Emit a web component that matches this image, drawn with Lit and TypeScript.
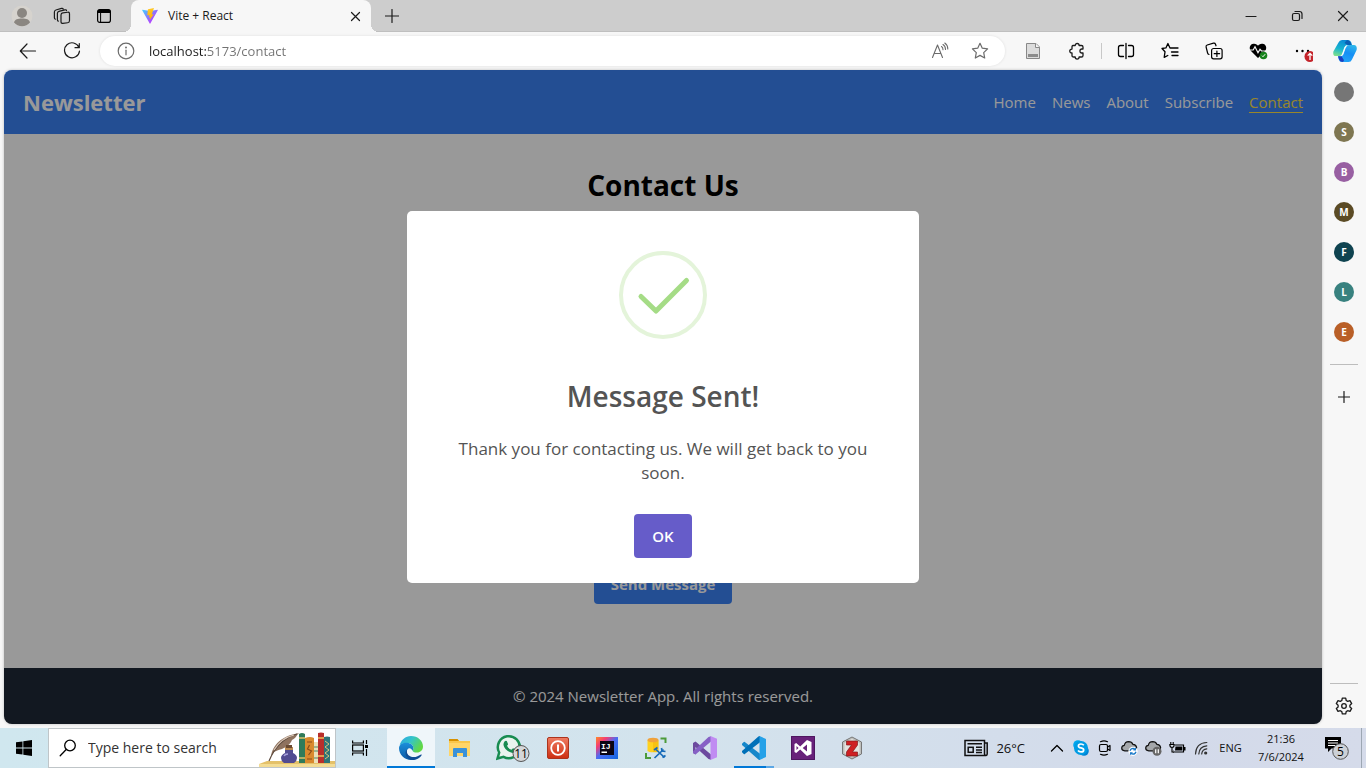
import { LitElement, html, css, svg } from "lit";
import { customElement, state } from "lit/decorators.js";

const avatar = html`<svg width="22" height="22" viewBox="0 0 22 22"><circle cx="11" cy="11" r="10.5" fill="#d6d3ce"/><circle cx="11" cy="8" r="5" fill="#8a8681"/><path d="M3 17.4c1-3 3.5-3.9 8-3.9s7 .9 8 3.9a10.300 10.300 0 0 1-16 0z" fill="#8a8681"/></svg>`;

const line = (size: number, body: unknown, color = "#1b1b1b", width = 1.2) => html`<svg
  width=${size} height=${size} viewBox="0 0 ${size} ${size}" fill="none" stroke=${color}
  stroke-width=${width} stroke-linecap="round" stroke-linejoin="round">${body}</svg>`;

const workspaces = line(18, svg`<rect x="8" y="5.500" width="8.500" height="10.500" rx="1.800" transform="skewY(-8) translate(0 1.800)"/><path d="M5.400 14.200q-1-.2-1-1.500V6.200q0-1.500 1.500-1.900l5.900-1.500q1.500-.3 1.700.8M2.400 12.200q-1-.3-1-1.500V5q0-1.600 1.500-2L8.500 1.400q1.400-.3 1.700.6"/>`);
const tabActions = html`<svg width="16" height="16" viewBox="0 0 16 16"><rect x="1.600" y="1.600" width="12.800" height="12.800" rx="2.200" fill="none" stroke="#000" stroke-width="1.200"/><path d="M1.500 5V3.500a2 2 0 0 1 2-2h9a2 2 0 0 1 2 2V5z" fill="#000"/><path d="M4.600 5v9.500" stroke="#000"/></svg>`;
const vite = html`<svg width="16" height="16" viewBox="0 0 16 16"><defs><linearGradient id="v1" x1="0" y1="0" x2="1" y2="1"><stop offset="0" stop-color="#41d1ff"/><stop offset=".8" stop-color="#bd34fe"/></linearGradient><linearGradient id="v2" x1="0" y1="0" x2="0" y2="1"><stop offset="0" stop-color="#ffc928"/><stop offset="1" stop-color="#ffb000"/></linearGradient></defs><path d="M15.800 2.300 8.300 15.600q-.3.400-.6 0L.2 2.300q-.2-.5.3-.5L8 3.100l7.500-1.300q.5 0 .3.500z" fill="url(#v1)"/><path d="M12 .1 6.100 1.200q-.2 0-.2.200L5.300 7.300l2.200.0-.5 2.200 1.200-.3-.5 2.800 4-5.700-2 .2z" fill="url(#v2)"/></svg>`;
const cross = (n: number) => line(n, svg`<path d="M1.500 1.500 ${n - 1.5} ${n - 1.5}M${n - 1.5} 1.500 1.500 ${n - 1.5}"/>`);
const plus = line(14, svg`<path d="M7 .5v13M.5 7h13"/>`);
const minimize = line(12, svg`<path d="M1 6.500h10"/>`);
const restore = line(12, svg`<rect x="1.500" y="3.500" width="7" height="7" rx="1.500"/><path d="M4 1.500h4.500a2.500 2.500 0 0 1 2.500 2.500v4.500"/>`);
const back = line(18, svg`<path d="M16.500 9H1.500M8 2 1.300 9 8 16"/>`);
const refresh = line(18, svg`<path d="M16 5.500A7.500 7.500 0 1 0 16.500 9M16.300 1.500v4.200H12"/>`);
const info = line(18, svg`<circle cx="9" cy="9" r="7.800"/><path d="M9 8.200v4.600"/><circle cx="9" cy="5.600" r=".4"/>`, "#6b6b6b");
const readAloud = line(18, svg`<path d="M1.500 15.500 6.500 3l5 12.500M3.300 11.500h6.500M10.500 4.500q1.500 1 1.500 3.200M12 2.500q2.500 1.500 2.500 5M13.800 1q3 2 3 6"/>`, "#6b6b6b", 1.1);
const star = line(18, svg`<path d="M9 1.300l2.300 4.900 5.300.7-3.900 3.700 1 5.400L9 13.400 4.300 16l1-5.400L1.400 6.900l5.300-.7z"/>`, "#6b6b6b");
const savedPage = html`<svg width="16" height="18" viewBox="0 0 16 18"><path d="M1.500 1.500h9.500l3.500 3.500v11.500h-13z" fill="#dcdcdc" stroke="#888"/><path d="M10.500 1.500V5.500h4" fill="#f5f5f5" stroke="#888"/><path d="M3 12h10v3H3z" fill="#8c8c8c"/></svg>`;
const puzzle = line(18, svg`<path d="M5 3.500h2.200c0-2.700 3.900-2.700 3.900 0h2.300q1.600 0 1.600 1.600V7h-1.400c-2.300.2-2.300 3.800 0 4H15v2.400q0 1.600-1.600 1.600h-2.300c0 2.700-3.900 2.700-3.900 0H5.600Q4 15 4 13.400V11C1 11.100 1 7 4 7.100V5.100Q4 3.500 5 3.500z"/>`, "#1b1b1b", 1.3);
const split = line(18, svg`<path d="M6.500 3.500h-3q-2 0-2 2v7q0 2 2 2h3M11.500 3.500h3q2 0 2 2v7q0 2-2 2h-3M9 1.500v15"/>`, "#000", 1.3);
const favorites = line(18, svg`<path d="M11 6H9L6.900 1.500 4.900 5.900 1 6.500l3 3.300-.8 5.600L6.800 13.500M11 6h6M10.500 10H17M11 13.500h6"/>`, "#000", 1.3);
const collections = line(18, svg`<rect x="6.600" y="6.500" width="10.500" height="10.300" rx="2"/><path d="M11.900 9v5.400M9.200 11.700h5.400M4 12.500Q2.900 12.300 2.600 11L1.100 5Q.8 3.500 2.200 3L8.500 1.200q1.500-.3 2 1l.5 1.600"/>`, "#000", 1.2);
const heart = html`<svg width="20" height="20" viewBox="0 0 20 20"><path d="M10 17 3 10C.5 7 2 3 5.500 2.700 8 2.500 9.200 3.700 10 4.700c.8-1 2-2.200 4.500-2 3.500.3 5 4.300 2.500 7.300z" fill="#000"/><path d="M1.500 9h3.700L7 5.800l3 6 2-3.500 1.500 1.700H18" fill="none" stroke="#f7f7f7" stroke-width="1.200"/><circle cx="15.500" cy="14.500" r="3.800" fill="#16811b"/><path d="m14 14.700 1 1 2.200-2.500" fill="none" stroke="#fff"/></svg>`;
const more = html`<svg width="22" height="22" viewBox="0 0 22 22"><g fill="#000"><circle cx="6" cy="11" r="1.200"/><circle cx="11.500" cy="11" r="1.200"/><circle cx="17" cy="11" r="1.200"/></g><circle cx="19" cy="16.500" r="5.500" fill="#c4242b"/><path d="M19 20v-6.500M16.700 15.600 19 13.300l2.300 2.300" fill="none" stroke="#fff" stroke-width="1.300"/></svg>`;
const copilot = html`<svg width="24" height="24" viewBox="0 0 24 24"><defs><linearGradient id="c1" x1=".5" y1="0" x2=".2" y2="1"><stop offset="0" stop-color="#0a8bd6"/><stop offset=".55" stop-color="#17b5cf"/><stop offset="1" stop-color="#7fe08a"/></linearGradient><linearGradient id="c2" x1=".8" y1="0" x2=".4" y2="1"><stop offset="0" stop-color="#2fb8ea"/><stop offset=".5" stop-color="#168ff5"/><stop offset="1" stop-color="#22a4f8"/></linearGradient></defs><path d="M5.500 3.500Q6.500 1 9 1h6q2.500 0 3.300 2.500L19 6h-4Q12.500 6 11.600 8.500L9.500 14.500Q8.700 17 6.500 17H3Q-.5 17 .4 12.500z" fill="url(#c1)"/><path d="M14 1q2.700 0 3.600 2.500L18.500 6h-4L11.500 4z" fill="#0b5fb4"/><path d="M19 20.500Q18 23 15.500 23H9q-2.500 0-3.200-2.500L5 17.300h2q2.300 0 3.100-2.300l2.400-6.700Q13.500 6 16 6h5q3.500.5 2.600 5z" fill="url(#c2)"/><path d="M10 23q-3 0-4-2.500L5 17.300h3.500l2.500 4z" fill="#1c3fc0"/><path d="m12.500 9.500 2-3.500q-2.500 0-3.300 2.500L9 15q-.5 1.500-1.500 2.300 2.300 0 3-2z" fill="#fff" opacity=".85"/></svg>`;
const gear = line(18, svg`<circle cx="9" cy="9" r="2.300"/><path d="M7.300 1.200h3.400l.5 2.300 1.500.9 2.300-.8 1.700 3-1.800 1.600v1.700l1.800 1.500-1.700 3-2.300-.7-1.500.9-.5 2.200H7.300l-.5-2.200-1.500-.9-2.300.7-1.700-3 1.800-1.500V8.200L1.300 6.600l1.700-3 2.300.8 1.500-.9z"/>`, "#1b1b1b", 1.3);

const windows = html`<svg width="16" height="16" viewBox="0 0 16 16" fill="#000"><path d="M0 2.300 6.500 1.400v6.200H0zM7.300 1.300 16 0v7.600H7.300zM0 8.400h6.500v6.200L0 13.700zM7.300 8.400H16V16l-8.700-1.300z"/></svg>`;
const searchGlass = line(18, svg`<circle cx="11" cy="6.500" r="5.300"/><path d="M7.200 10.500 1.200 16.800"/>`, "#000", 1.3);
const taskView = html`<svg width="18" height="16" viewBox="0 0 18 16" fill="none" stroke="#000" stroke-width="1.200"><path d="M1.600.5v2.500h10.800V.5M1.600 15.500V13h10.800v2.500"/><rect x="1.600" y="5" width="10.800" height="6"/><path d="M15.500 0v4M15.500 9v7"/><path d="M14 5h3v3h-3z" fill="#000" stroke="none"/></svg>`;
const searchArt = html`<svg width="76" height="38" viewBox="0 0 76 38"><path d="M0 35 8 32h68v6H0z" fill="#e4c169"/><path d="M0 35h76v3H0z" fill="#f3dc93"/><path d="M12 27C14 16 22 7 40 4c-3 3-3 5-7 7-2 5-6 7-10 9-4 1-6 2-8 3z" fill="#8f735f"/><path d="M10 32C15 20 24 9 38 5" fill="none" stroke="#5d4a3d" stroke-width="1.200"/><path d="M15 21C20 13 26 8 35 6" fill="none" stroke="#d9c7b8" stroke-width="1.200"/><path d="M26 18h8v4h-8z" fill="#b98a52"/><path d="M27 16h6v3h-6z" fill="#6a4a31"/><path d="M26 21h8v3q4 2 4 5t-3 5H25q-3-2-3-5t4-5z" fill="#514b91"/><path d="M25 27q1-2 4-2" stroke="#a6a0dc" stroke-width="1.500" fill="none"/><path d="M40 5q3-2 6 0v29h-6z" fill="#2f7b5a"/><path d="M40 9h6M40 29h6" stroke="#dcc46c" stroke-width="1.500"/><path d="M46 9q5-2 9 0v25h-9z" fill="#d98a2e"/><path d="M48 13h5M48 30h5M50.500 16l-2 4 4 2-3 4" stroke="#8a4b17" fill="none" stroke-width="1.200"/><path d="M55 13h4v21h-4z" fill="#ece0b8"/><path d="M55 18h4M55 22h4M55 29h4" stroke="#4f8768"/><path d="M59 4q3-1 6 0v30h-6z" fill="#b92f2b"/><path d="M59 9h6M59 27h6" stroke="#efbf59" stroke-width="1.500"/><path d="M65 8q3-1 6 0v26h-6z" fill="#2e7478"/><path d="m66 12 4 3-4 3 4 3-4 3 4 3-4 3" stroke="#d9c37b" fill="none"/></svg>`;

const edge = html`<svg width="24" height="24" viewBox="0 0 24 24"><defs><linearGradient id="e1" x1="0" y1="0" x2="1" y2=".5"><stop offset="0" stop-color="#2aa4e6"/><stop offset=".5" stop-color="#34c4c8"/><stop offset="1" stop-color="#62d845"/></linearGradient><linearGradient id="e2" x1="0" y1="0" x2="0" y2="1"><stop offset="0" stop-color="#1b8fdb"/><stop offset="1" stop-color="#0c59a4"/></linearGradient></defs><path d="M.6 9.500C2 4 6.500 0 12 0c7 0 12 5 12 10.500 0 3.500-2.500 6-6 6-3 0-4.500-1-4.500-1.800 0-.6.9-1 .9-2.700C14.400 9.500 12 7 8.500 7 5 7 1.500 8 .6 9.500z" fill="url(#e1)"/><path d="M0 12C.2 8.500 3.500 6.700 7.500 6.700c4 0 6.900 2.500 6.900 5.300 0 1.500-.8 2-.9 2.700-1.200-3-4-3.500-5.500-.5-1.500 4 2 9 8 9.100C8 26 0 20 0 12z" fill="url(#e2)"/><path d="M8.200 13.500c-2 5.500 4.800 9.500 10.300 6.700l3.500-1.700c.6-.3.900.3.600.7C21 22 17 24 13.800 24 8 24 4 16.500 8.200 13.500z" fill="#104d94"/></svg>`;
const folder = html`<svg width="22" height="20" viewBox="0 0 22 20"><path d="M0 1h8.500l1.500 2h11v15H0z" fill="#f8c64b"/><path d="M0 1h8.500l1.500 2H0z" fill="#d79100"/><path d="M0 5h21v13H0z" fill="#ffd568"/><path d="M4 11q0-1 1-1h12q1 0 1 1v8h-4v-4H8v4H4z" fill="#3a92d9"/></svg>`;
const whatsapp = html`<svg width="34" height="28" viewBox="0 0 34 28"><path d="m1.500 24.500 1.700-6A11 11 0 1 1 7.500 22.800z" fill="#e9f4ef" stroke="#188c51" stroke-width="2.500"/><path d="M8.500 7.500Q9.500 6.500 10.800 7l1.200 3q.2.600-1 1.800 1.500 3 4.500 4l1.500-1.600 3 1.400q.6.500-.2 2-1.500 1.800-4 1.200C11 17.500 8 14 7.500 11q-.2-2 1-3.500z" fill="#188c51"/><circle cx="25" cy="19.500" r="8" fill="#d5d7d9" stroke="#555"/><text x="25" y="24" text-anchor="middle" class="badge-text">11</text></svg>`;
const power = html`<svg width="22" height="22" viewBox="0 0 22 22"><defs><linearGradient id="p1" x1="0" y1="0" x2="0" y2="1"><stop offset="0" stop-color="#ef7c62"/><stop offset="1" stop-color="#cd2f12"/></linearGradient></defs><rect x=".5" y=".5" width="21" height="21" rx="1.500" fill="url(#p1)" stroke="#ac341d"/><circle cx="11" cy="11" r="6.800" fill="none" stroke="#fff" stroke-width="1.800"/><path d="M11 7.500v7" stroke="#fff" stroke-width="2"/></svg>`;
const intellij = html`<svg width="22" height="22" viewBox="0 0 22 22"><defs><linearGradient id="i1" x1="0" y1="0" x2="1" y2="1"><stop offset="0" stop-color="#ff8a29"/><stop offset=".25" stop-color="#f43d73"/><stop offset=".5" stop-color="#4a6df5"/><stop offset="1" stop-color="#1266e0"/></linearGradient></defs><path d="M0 0h22v22H0z" fill="url(#i1)"/><path d="M4 4h14v14H4z" fill="#0b0414"/><path d="M5.500 14.500H11V16H5.500z" fill="#fff"/><text x="5" y="11.500" class="ij-text">IJ</text></svg>`;
const database = html`<svg width="22" height="22" viewBox="0 0 22 22"><path d="M2.500 3v11q2 2 11 1V3z" fill="#ffd21f"/><path d="M8 4h5.500v11H8z" fill="#eeb000" opacity=".45"/><ellipse cx="8" cy="3" rx="5.500" ry="2.300" fill="#f0a23c"/><path d="M15.500 1.500h5V6M1 16v5h5" fill="none" stroke="#4c9b3a" stroke-width="2"/><path d="m11 12.500 8.500 8M18.500 12.500l-9 8.500" stroke="#1569b8" stroke-width="1.700"/><path d="m9 13 3.500-2.500M16.500 11l.5 3 3.500.5M17.500 20.500l3-2" fill="none" stroke="#1569b8" stroke-width="1.700"/></svg>`;
const visualStudio = html`<svg width="24" height="24" viewBox="0 0 24 24"><path d="M0 7 2.500 5.500 18 18.500v5.300L15.500 23 2.500 11v7.500L0 17z" fill="#6c4a9e"/><path d="m2.500 18.500 15.500-13V.2L15.500 1 0 15.500V17z" fill="#8661c5"/><path d="M17.500 0 24 2.800v18.400L17.500 24z" fill="#c08cf2"/></svg>`;
const vscode = html`<svg width="24" height="24" viewBox="0 0 24 24"><path d="M0 7.700 1.800 6q.5-.4 1 0L18 17.800V24q-1 0-1.600-.6L0 9q-.7-.7 0-1.300z" fill="#1687ca"/><path d="M0 16.300 1.800 18q.5.400 1 0L18 6.200V0q-1 0-1.600.6L0 15q-.7.700 0 1.300z" fill="#0070b8"/><path d="m17.500 0 6 2.800q.5.200.5.800v16.800q0 .6-.5.800l-6 2.800z" fill="#25a1e8"/></svg>`;
const visualStudioOld = html`<svg width="24" height="24" viewBox="0 0 24 24"><path d="M0 0h24v24H0z" fill="#68217a"/><path d="M.5.500h23v23H.5z" fill="none" stroke="#4e1660"/><path d="m3.500 8 1.700-1 4 3.500L16 4l4.500 2v12L16 20l-6.800-6.500-4 3.500-1.700-1zm2 2v4l2-2zm6.200 2 4.300 3.500v-7z" fill="#fff" fill-rule="evenodd"/></svg>`;
const zotero = html`<svg width="22" height="24" viewBox="0 0 22 24"><path d="M11 1 20.500 6v12L11 23 1.500 18V6z" fill="#bfc0bd" stroke="#777"/><path d="M11 3 18.500 7v10L11 21 3.500 17V7z" fill="#e3e2df"/><path d="M5.500 5h11v4l-5 7h5v4h-11v-4l5-7h-5z" fill="#cf2023" stroke="#87171a" stroke-width=".7"/></svg>`;

const news = html`<svg width="24" height="18" viewBox="0 0 24 18" fill="none" stroke="#111" stroke-width="1.500"><path d="M20.500 1.500H1v15h21q1.200-.3 1.200-1.500V4h-2.700zM20.500 4v11q0 1.500 1.500 1.500M3.500 4.800H18M12 8.300h6M12 11h6M12 13.500h6"/><rect x="4.200" y="8.300" width="5" height="5"/></svg>`;
const chevron = line(14, svg`<path d="m1.500 10 5.500-5.500 5.500 5.500"/>`, "#000", 1.3);
const skype = html`<svg width="16" height="16" viewBox="0 0 16 16"><circle cx="5" cy="5" r="4.800" fill="#00a8ee"/><circle cx="11" cy="11" r="4.800" fill="#0083d4"/><circle cx="8" cy="8" r="7" fill="#009ce4"/><path d="M10.800 5.200Q9.800 4 8 4 5.400 4 5.400 5.900q0 1.500 2.600 2t2.700 2q0 2-2.700 2-2 0-3-1.400" fill="none" stroke="#fff" stroke-width="1.700"/></svg>`;
const meetNow = line(16, svg`<rect x="2.500" y="4.500" width="8" height="7" rx="1.500"/><path d="m10.500 7 2.500-1.500v5l-2.500-1.500M3.500 1.700q3.500-1.700 7 0M3.500 14.300q3.500 1.700 7 0"/>`, "#000", 1.2);
const cloud = (badge: unknown) => html`<svg width="17" height="16" viewBox="0 0 17 16"><path d="M3.800 10.800Q.7 10.600.7 8q.1-2.400 2.600-2.700Q4 1.700 7.600 1.600q3.200 0 4.400 2.800 3 .2 3.600 3-.2 3.300-3 3.400z" fill="#a4a7aa" stroke="#111" stroke-width="1.200"/>${badge}</svg>`;
const cloudSync = cloud(svg`<circle cx="12" cy="11.300" r="4.600" fill="#fff"/><path d="M9 10.800q.8-2.400 3.200-2.400l2 1M14.400 7.800v2h-2M15 11.800q-.8 2.400-3.200 2.400l-2-1M9.600 14.800v-2h2" fill="none" stroke="#1979c9" stroke-width="1.300"/>`);
const cloudPaused = cloud(svg`<circle cx="12" cy="11.300" r="4.500" fill="#666"/><path d="M10.700 9.300v4M13.300 9.300v4" stroke="#fff" stroke-width="1.200"/>`);
const battery = html`<svg width="17" height="14" viewBox="0 0 17 14"><path d="M6 4h8.500v7H4.500V9.500" fill="none" stroke="#000" stroke-width="1.200"/><path d="M6.500 5.500h6.800v4H6z" fill="#000"/><path d="M15 6h1.500v3.500H15z" fill="#000"/><path d="M1.800 1v2M4.200 1v2M.8 3.500h4.400q0 3-2.200 3T.8 3.500zM3 6.500V11h2" fill="#dce3ec" stroke="#000" stroke-width="1.100"/></svg>`;
const wifi = line(14, svg`<path d="M1.500 13Q2 2 12.800 1.500M4.800 13q.4-7.600 8-8.200M7.700 13q.4-4.800 5.100-5.200"/><circle cx="11.700" cy="12" r="1" fill="#333"/>`, "#333", 1.2);
const notifications = html`<svg width="26" height="24" viewBox="0 0 26 24"><path d="M1 1h16v11.500H7.500L4 16v-3.500H1z" fill="#000"/><path d="M4 4.500h10M4 7h10M4 9.500h10" stroke="#fff"/><circle cx="16.500" cy="15.500" r="7.800" fill="#ccd0d6" stroke="#555"/><text x="16.500" y="20" text-anchor="middle" class="badge-text">5</text></svg>`;

const success = html`<svg width="88" height="88" viewBox="0 0 88 88" fill="none"><circle cx="44" cy="44" r="42" stroke="#e4f4da" stroke-width="4"/><path d="M22 45.500 37 60 67.500 29.500" stroke="#a5dc86" stroke-width="5" stroke-linecap="round" stroke-linejoin="round"/></svg>`;

const contacts = [
  { letter: "", color: "#767676" },
  { letter: "S", color: "#7e7651" },
  { letter: "B", color: "#985fa2" },
  { letter: "M", color: "#5b4b25" },
  { letter: "F", color: "#0f4350" },
  { letter: "L", color: "#38817f" },
  { letter: "E", color: "#b95f27" },
];

const apps = [
  { name: "Edge", icon: edge, mark: "active" },
  { name: "File Explorer", icon: folder, mark: "" },
  { name: "WhatsApp", icon: whatsapp, mark: "offset" },
  { name: "Power", icon: power, mark: "" },
  { name: "IntelliJ IDEA", icon: intellij, mark: "" },
  { name: "Database", icon: database, mark: "" },
  { name: "Visual Studio", icon: visualStudio, mark: "" },
  { name: "Visual Studio Code", icon: vscode, mark: "running" },
  { name: "Visual Studio 2012", icon: visualStudioOld, mark: "" },
  { name: "Zotero", icon: zotero, mark: "" },
];

const base = css`
  * { box-sizing: border-box; }
  button { border: 0; padding: 0; margin: 0; background: none; font: inherit; color: inherit;
    display: flex; align-items: center; justify-content: center; }
  input { font: inherit; border: 0; padding: 0; background: none; outline: 0; min-width: 0; }
  svg { display: block; flex: none; }
`;

@customElement("browser-chrome")
class BrowserChrome extends LitElement {
  static styles = [base, css`
    :host { display: block; font: 12px/16px "Open Sans", "Noto Sans", sans-serif; color: #1b1b1b; }
    .tabs { display: flex; height: 32px; background: #cdcdcd; border-bottom: 1px solid #bfbfbf; }
    .tabs > button { width: 42px; }
    .tabs > .avatar { width: 44px; }
    .tabs > .workspaces { width: 36px; }
    .tabs > .tab-menu { width: 48px; }
    .tab { position: relative; display: flex; align-items: center; gap: 10px; width: 240px; height: 32px;
      margin-left: 3px; padding: 0 10px 0 11px; background: #f7f7f7; border-radius: 8px 8px 0 0; }
    .tab::before, .tab::after { content: ""; position: absolute; bottom: 0; width: 8px; height: 8px; }
    .tab::before { left: -8px; background: radial-gradient(circle at 0 0, transparent 8px, #f7f7f7 8px); }
    .tab::after { right: -8px; background: radial-gradient(circle at 100% 0, transparent 8px, #f7f7f7 8px); }
    .title { flex: 1; }
    .title { font-size: 12px; }
    .window { display: flex; margin-left: auto; }
    .window button { width: 46px; }
    .tools { display: flex; align-items: center; height: 38px; background: #f7f7f7; }
    .tools > button { width: 44px; height: 32px; }
    .tools > .back { margin-left: 6px; }
    .tools > .copilot { width: 42px; }
    .address { display: flex; align-items: center; flex: 1; height: 30px; margin: 0 6px; padding: 0 16px 0 17px;
      border-radius: 15px; background: #fff; box-shadow: 0 0 3px #0000001a; gap: 14px; }
    .address input { flex: 1; font-size: 13px; line-height: 20px; color: transparent;
      background: linear-gradient(90deg, #1b1b1b 58px, #717171 58px); background-clip: text; -webkit-background-clip: text; }
    .address .extra { display: flex; gap: 22px; }
    .rule { width: 1px; height: 16px; margin: 0 2px; background: #c8c8c8; }
  `];

  render() {
    return html`
      <div class="tabs">
        <button class="avatar" aria-label="Profile">${avatar}</button>
        <button class="workspaces" aria-label="Workspaces">${workspaces}</button>
        <button class="tab-menu" aria-label="Tab actions">${tabActions}</button>
        <div class="tab">${vite}<span class="title">Vite + React</span><button aria-label="Close tab">${cross(11)}</button></div>
        <button aria-label="New tab">${plus}</button>
        <div class="window">
          <button aria-label="Minimize">${minimize}</button>
          <button aria-label="Restore">${restore}</button>
          <button aria-label="Close">${cross(12)}</button>
        </div>
      </div>
      <div class="tools">
        <button class="back" aria-label="Back">${back}</button>
        <button aria-label="Refresh">${refresh}</button>
        <div class="address">
          ${info}
          <input aria-label="Address" .value=${"localhost:5173/contact"} spellcheck="false">
          <div class="extra"><button aria-label="Read aloud">${readAloud}</button><button aria-label="Favorite">${star}</button></div>
        </div>
        <button aria-label="Saved page">${savedPage}</button>
        <button aria-label="Extensions">${puzzle}</button>
        <span class="rule"></span>
        <button aria-label="Split screen">${split}</button>
        <button aria-label="Favorites">${favorites}</button>
        <button aria-label="Collections">${collections}</button>
        <button aria-label="Browser essentials">${heart}</button>
        <button aria-label="Settings and more">${more}</button>
        <button class="copilot" aria-label="Copilot">${copilot}</button>
      </div>`;
  }
}

@customElement("side-bar")
class SideBar extends LitElement {
  static styles = [base, css`
    :host { display: flex; flex-direction: column; align-items: center; width: 44px; padding-top: 2px;
      font: bold 10px/20px "Open Sans", "Noto Sans", sans-serif; }
    button { width: 40px; height: 40px; flex: none; }
    .dot { width: 20px; height: 20px; border-radius: 50%; color: #fff; }
    hr { width: 28px; height: 1px; margin: 12px 0; border: 0; background: #bdbdbd; flex: none; }
    .last { margin: auto 0 2px; }
    .gear { margin-bottom: 2px; }
  `];

  render() {
    return html`
      ${contacts.map((c) => html`<button aria-label="Contact"><span class="dot" style="background:${c.color}">${c.letter}</span></button>`)}
      <hr>
      <button aria-label="Add">${line(12, svg`<path d="M6 .5v11M.5 6h11"/>`)}</button>
      <hr class="last">
      <button class="gear" aria-label="Settings">${gear}</button>`;
  }
}

@customElement("contact-page")
class ContactPage extends LitElement {
  @state() private open = true;

  static styles = [base, css`
    :host { position: relative; display: flex; flex-direction: column; flex: 1; min-width: 0; margin: 0 0 4px 4px;
      border-radius: 8px; overflow: hidden; background: #fff; box-shadow: 0 0 3px #00000040;
      font: 15px/24px "Open Sans", "Noto Sans", sans-serif; color: #000; }
    nav { display: flex; align-items: center; justify-content: space-between; height: 64px; padding: 0 19px; background: #3b82f6; color: #fff; }
    .brand { font-size: 22px; font-weight: 700; line-height: 32px; }
    .links { display: flex; gap: 16px; }
    a { color: inherit; text-decoration: none; line-height: 20px; border-bottom: 1px solid transparent; }
    a.current { color: #fde047; border-bottom-color: #fde047; }
    main { flex: 1; display: flex; flex-direction: column; align-items: center; padding: 32px 16px; }
    h1 { margin: 0 0 24px; font-size: 28px; line-height: 38px; font-weight: 700; }
    form { display: flex; flex-direction: column; align-items: center; gap: 24px; width: 100%; max-width: 448px; }
    .field { width: 100%; height: 48px; border: 1px solid #d1d5db; border-radius: 4px; padding: 8px; font: inherit; resize: none; }
    textarea.field { height: 168px; }
    .send { height: 40px; padding: 0 17px; border-radius: 4px; background: #3b82f6; color: #fff; font-weight: 700; }
    footer { height: 56px; padding: 16px; text-align: center; background: #1f2937; color: #fff; }
    .overlay { position: absolute; inset: 0; display: flex; align-items: center; justify-content: center; background: #0006; }
    .dialog { display: flex; flex-direction: column; align-items: center; width: 512px; max-width: 100%; padding: 40px 29px 25px;
      border-radius: 5px; background: #fff; color: #545454; text-align: center; }
    .dialog h2 { margin: 35px 0 0; font-size: 28px; line-height: 44px; font-weight: 600; }
    .dialog p { margin: 19px 0 29px; font-size: 17px; line-height: 24px; }
    .ok { height: 44px; padding: 0 18px; border-radius: 4px; background: #665cc9; color: #fff; font-weight: 600; }
  `];

  render() {
    return html`
      <nav>
        <span class="brand">Newsletter</span>
        <div class="links">
          <a href="#home">Home</a><a href="#news">News</a><a href="#about">About</a><a href="#subscribe">Subscribe</a><a href="#contact" class="current">Contact</a>
        </div>
      </nav>
      <main>
        <h1>Contact Us</h1>
        <form @submit=${(e: Event) => { e.preventDefault(); this.open = true; }}>
          <input class="field" aria-label="Name">
          <input class="field" type="email" aria-label="Email">
          <textarea class="field" aria-label="Message"></textarea>
          <button class="send">Send Message</button>
        </form>
      </main>
      <footer>© 2024 Newsletter App. All rights reserved.</footer>
      ${this.open ? html`<div class="overlay">
        <div class="dialog" role="dialog" aria-labelledby="dialog-title">
          ${success}
          <h2 id="dialog-title">Message Sent!</h2>
          <p>Thank you for contacting us. We will get back to you soon.</p>
          <button class="ok" @click=${() => { this.open = false; }}>OK</button>
        </div>
      </div>` : ""}`;
  }
}

@customElement("task-bar")
class TaskBar extends LitElement {
  static styles = [base, css`
    :host { display: flex; height: 40px; background: linear-gradient(90deg, #d0e7ef, #d3e3ed 50%, #d3daea 85%, #d5dbea);
      font: 11px/18px "Open Sans", "Noto Sans", sans-serif; color: #111; }
    .start, .view { width: 48px; }
    .search { display: flex; align-items: center; width: 288px; padding-left: 10px; gap: 11px; border: 1px solid #bfc5c8; background: #fff; }
    .search input { flex: 1; font-size: 14px; line-height: 20px; }
    .search input::placeholder { color: #333; opacity: 1; }
    .apps { display: flex; gap: 1px; margin-left: 3px; }
    .apps button { width: 48px; border: solid transparent; border-width: 2px 0; }
    .apps .active { background: #eff6fa; border-bottom-color: #0078d7; }
    .apps .running { background: linear-gradient(90deg, #0078d7 32px, #5ba7e5 32px) center bottom / 40px 2px no-repeat border-box; }
    .apps .offset { padding-left: 8px; }
    .tray { display: flex; margin-left: auto; }
    .weather { gap: 8px; margin-right: 20px; font-size: 13px; }
    .tray .icon { width: 24px; }
    .lang { width: 35px; }
    .clock { width: 66px; flex-direction: column; }
    .notice { width: 45px; }
    .peek { width: 5px; border-left: 1px solid #9da7b3; margin-left: 2px; }
    .badge-text { font: 12px "Open Sans", sans-serif; fill: #000; stroke: none; }
    .ij-text { font: bold 8px "Liberation Mono", monospace; fill: #fff; }
  `];

  render() {
    const tray = [["Hidden icons", chevron], ["Skype", skype], ["Meet now", meetNow], ["OneDrive", cloudSync], ["OneDrive paused", cloudPaused], ["Battery", battery], ["Network", wifi]];
    return html`
      <button class="start" aria-label="Start">${windows}</button>
      <label class="search">${searchGlass}<input placeholder="Type here to search" aria-label="Search">${searchArt}</label>
      <button class="view" aria-label="Task view">${taskView}</button>
      <div class="apps">${apps.map((a) => html`<button class=${a.mark} aria-label=${a.name}>${a.icon}</button>`)}</div>
      <div class="tray">
        <button class="weather">${news}<span>26°C</span></button>
        ${tray.map(([name, icon]) => html`<button class="icon" aria-label=${name}>${icon}</button>`)}
        <button class="lang">ENG</button>
        <button class="clock"><span>21:36</span><span>7/6/2024</span></button>
        <button class="notice" aria-label="Notifications">${notifications}</button>
        <button class="peek" aria-label="Show desktop"></button>
      </div>`;
  }
}

@customElement("app-root")
class AppRoot extends LitElement {
  static styles = css`
    :host { display: flex; flex-direction: column; min-height: 100vh; background: #f7f7f7; }
    .view { display: flex; flex: 1; }
  `;

  render() {
    return html`
      <browser-chrome></browser-chrome>
      <div class="view"><contact-page></contact-page><side-bar></side-bar></div>
      <task-bar></task-bar>`;
  }
}
